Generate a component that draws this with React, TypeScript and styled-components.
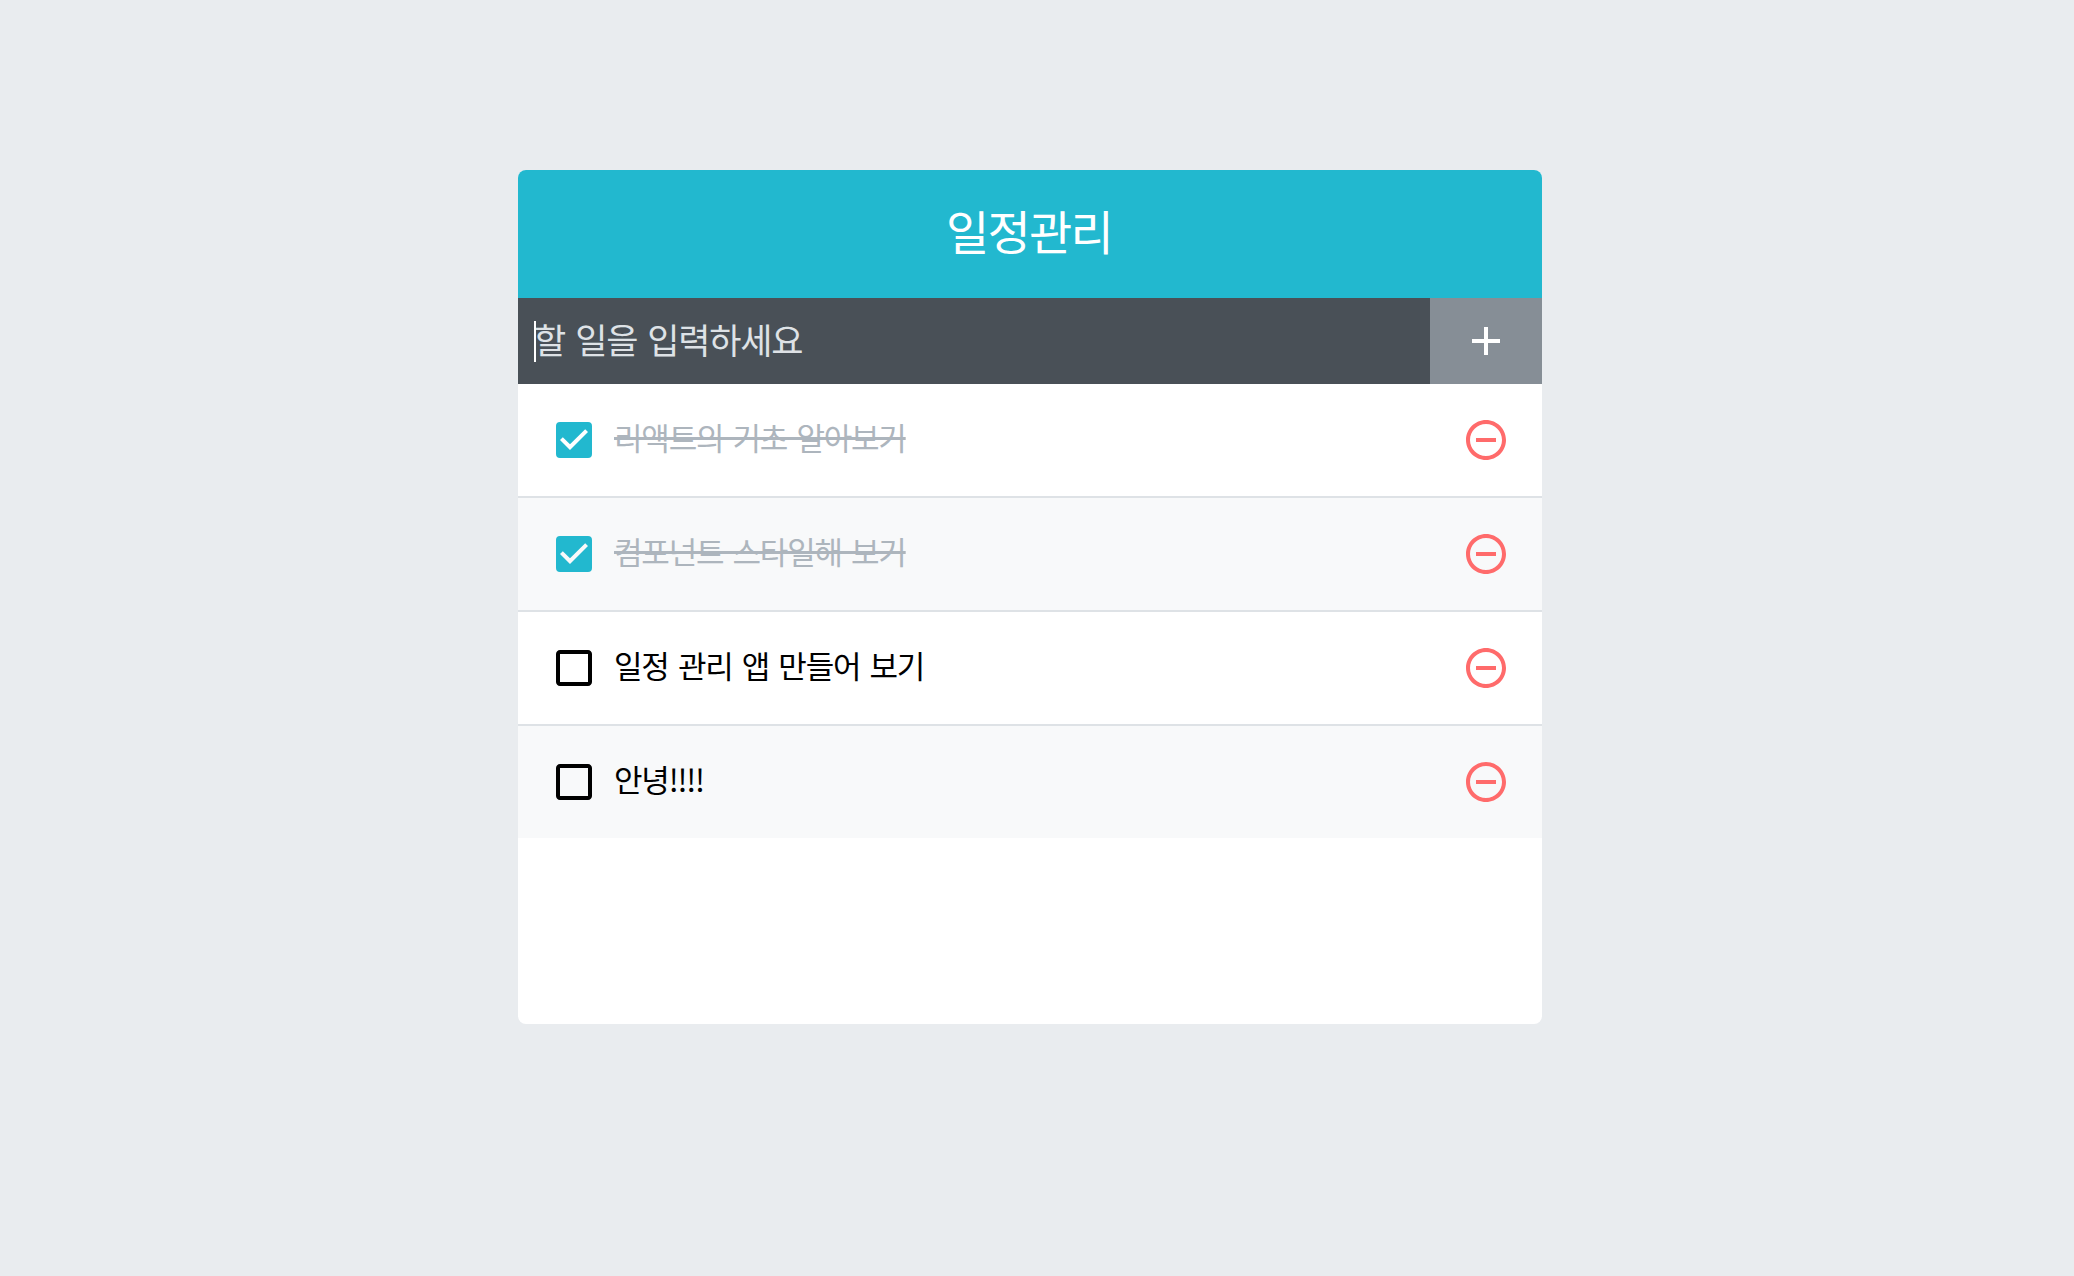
import styled, { createGlobalStyle } from "styled-components";
import { MdAdd, MdCheckBox, MdCheckBoxOutlineBlank, MdRemoveCircleOutline } from "react-icons/md";

const GlobalStyle = createGlobalStyle`
    body {
        margin: 0;
        background: #e9ecef;
        font-family: "Noto Sans CJK KR", "Noto Sans", sans-serif;
    }
`;

const Template = styled.div`
    width: 1024px;
    margin: 170px 0 0 518px;
    border-radius: 8px;
    overflow: hidden;
    background: #fff;
`;

const AppTitle = styled.div`
    height: 128px;
    display: flex;
    justify-content: center;
    align-items: center;
    padding: 0 2px 10px 0;
    box-sizing: border-box;
    background: #22b8cf;
    color: #fff;
    font-size: 47px;
    letter-spacing: -1.8px;
`;

const InsertForm = styled.form`
    position: relative;
    height: 86px;
    display: flex;
    background: #495057;
    margin: 0;
`;

const Input = styled.input`
    flex: 1;
    min-width: 0;
    padding: 0 16px 6px;
    border: none;
    outline: none;
    background: none;
    color: #fff;
    font-family: inherit;
    font-size: 35px;
    letter-spacing: -1.2px;
    word-spacing: 3.5px;
    &::placeholder {
        color: #dee2e6;
        opacity: 1;
    }
`;

const Caret = styled.span`
    position: absolute;
    left: 16px;
    top: 23px;
    width: 1.5px;
    height: 41px;
    background: #fff;
`;

const AddButton = styled.button`
    width: 112px;
    padding: 0;
    display: flex;
    justify-content: center;
    align-items: center;
    border: none;
    background: #868e96;
    color: #fff;
    font-size: 48px;
`;

const List = styled.div`
    height: 640px;
`;

const Item = styled.div<{ $even: boolean }>`
    display: flex;
    align-items: center;
    height: 112px;
    padding: 0 32px;
    background: ${(p) => (p.$even ? "#f8f9fa" : "#fff")};
    & + & {
        border-top: 2px solid #dee2e6;
    }
`;

const CheckBox = styled.div<{ $checked: boolean }>`
    flex: 1;
    display: flex;
    align-items: center;
    min-width: 0;
    font-size: 48px;
    color: ${(p) => (p.$checked ? "#22b8cf" : "#000")};
    svg {
        flex: none;
    }
`;

const ItemText = styled.div<{ $checked: boolean }>`
    margin-left: 16px;
    padding-bottom: 8px;
    font-size: 31px;
    letter-spacing: -1.2px;
    word-spacing: 3.5px;
    color: ${(p) => (p.$checked ? "#adb5bd" : "#000")};
    text-decoration: ${(p) => (p.$checked ? "line-through" : "none")};
    text-decoration-thickness: 2.5px;
`;

const Remove = styled.div`
    display: flex;
    align-items: center;
    font-size: 48px;
    color: #ff6b6b;
`;

const todos = [
    { id: 1, text: "리액트의 기초 알아보기", checked: true },
    { id: 2, text: "컴포넌트 스타일해 보기", checked: true },
    { id: 3, text: "일정 관리 앱 만들어 보기", checked: false },
    { id: 4, text: "안녕!!!!", checked: false },
];

const App = () => (
    <>
        <GlobalStyle />
        <Template>
            <AppTitle>일정관리</AppTitle>
            <InsertForm>
                <Input placeholder="할 일을 입력하세요" />
                <Caret />
                <AddButton type="button">
                    <MdAdd />
                </AddButton>
            </InsertForm>
            <List>
                {todos.map((todo, i) => (
                    <Item key={todo.id} $even={i % 2 === 1}>
                        <CheckBox $checked={todo.checked}>
                            {todo.checked ? <MdCheckBox /> : <MdCheckBoxOutlineBlank />}
                            <ItemText $checked={todo.checked}>{todo.text}</ItemText>
                        </CheckBox>
                        <Remove>
                            <MdRemoveCircleOutline />
                        </Remove>
                    </Item>
                ))}
            </List>
        </Template>
    </>
);

export default App;
